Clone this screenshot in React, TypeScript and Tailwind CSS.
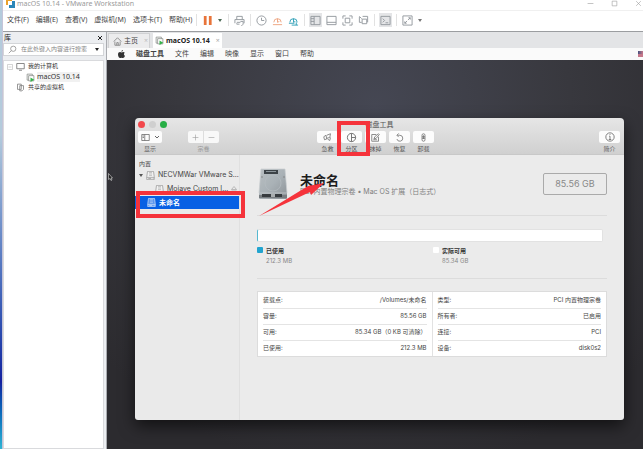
import type { ReactNode } from "react";

const stroke = { fill: "none", stroke: "currentColor", strokeWidth: 1 };

function Svg({ size = 11, className = "", children }: { size?: number; className?: string; children: ReactNode }) {
  return (
    <svg width={size} height={size} viewBox="0 0 12 12" className={`shrink-0 ${className}`} aria-hidden="true" {...stroke}>
      {children}
    </svg>
  );
}

function Separator() {
  return <span className="h-3 w-px shrink-0 bg-[#e2e2e2]" />;
}

function ToolButton({ label, pressed = false, className = "text-[#92979c]", children }: { label: string; pressed?: boolean; className?: string; children: ReactNode }) {
  return (
    <button
      type="button"
      aria-label={label}
      className={`flex h-[14px] w-[13px] shrink-0 items-center justify-center ${pressed ? "bg-[#e4e5e7]" : ""} ${className}`}
    >
      {children}
    </button>
  );
}

function Caret({ className = "" }: { className?: string }) {
  return (
    <svg width="4" height="3" viewBox="0 0 4 3" className={`shrink-0 ${className}`} aria-hidden="true">
      <path d="M0 0h4L2 3z" fill="currentColor" />
    </svg>
  );
}

function VmIcon() {
  return (
    <Svg size={9} className="text-[#858a85]">
      <path d="M3.500 9.500H1.500V1.500h7v2M3.500 3.500h7v7h-7z" />
      <path d="M6 6l5 3-5 3z" fill="#35b34a" stroke="none" />
    </Svg>
  );
}

function DriveIcon({ className = "text-[#9a9a9a]" }: { className?: string }) {
  return (
    <Svg size={9} className={className}>
      <path d="M2 .500h8l1 7v4H1v-4z" fill="#ffffff55" />
      <path d="M1 8.500h10M4 2.500h4M4 5.500h4M3 10h4M9 10h1" />
    </Svg>
  );
}

function TitleBar() {
  return (
    <header className="flex h-[11px] items-start justify-between border-b border-[#f0f0f0] bg-white pl-[3px]">
      <div className="flex h-[7px] items-center gap-[2px]">
        <svg width="9" height="9" viewBox="0 0 9 9" aria-hidden="true">
          <path d="M0 0h6v6H0z" fill="#e9a12c" />
          <path d="M3 2h6v7H3z" fill="#2c87b8" />
          <path d="M2 2h4v4H2z" fill="#fff" />
        </svg>
        <h1 className="text-[7px] leading-[8px] text-[#9a9a9a]">macOS 10.14 - VMware Workstation</h1>
      </div>
      <div className="flex h-[6px] items-center gap-[17px] pr-px text-[#9a9a9a]">
        <button type="button" aria-label="最小化"><Svg size={7}><path d="M1 6h10" /></Svg></button>
        <button type="button" aria-label="最大化"><Svg size={7}><path d="M2 2h8v8H2z" /></Svg></button>
        <button type="button" aria-label="关闭"><Svg size={7}><path d="M2 2l8 8M10 2l-8 8" /></Svg></button>
      </div>
    </header>
  );
}

const hostMenus = ["文件(F)", "编辑(E)", "查看(V)", "虚拟机(M)", "选项卡(T)", "帮助(H)"];

function Toolbar() {
  return (
    <div className="flex h-[21px] items-center border-b border-[#9b9da0] bg-white pb-[2px]">
      <nav className="flex shrink-0 gap-[7px] pr-1 pl-1 text-[7px] leading-[10px] text-[#444]">
        {hostMenus.map((m) => (
          <button key={m} type="button">{m}</button>
        ))}
      </nav>
      <div className="flex items-center gap-1">
        <Separator />
        <ToolButton label="暂停" className="text-[#e8743a]">
          <Svg><path d="M2 1h3v10H2zM7.500 1h3v10h-3z" fill="currentColor" stroke="none" /></Svg>
        </ToolButton>
        <Caret className="mr-[2px] text-[#4c6a55]" />
        <Separator />
        <ToolButton label="发送 Ctrl+Alt+Del">
          <Svg><path d="M3 5V1.500h6V5M1 9V5h10v4M3 8h4M7 7h3v3L8 12M3 9v1h3" /></Svg>
        </ToolButton>
        <Separator />
        <div className="flex gap-[3px]">
          <ToolButton label="拍摄快照"><Svg><circle cx="6" cy="6" r="5" /><path d="M6 3v3h3" /></Svg></ToolButton>
          <ToolButton label="恢复快照" className="text-[#eda27d]"><Svg><path d="M2 8a4 4 0 1 1 8 0M6 4v4l2-1M1 10.500h10" /></Svg></ToolButton>
          <ToolButton label="管理快照" className="text-[#299cb5]"><Svg><path d="M2 8a4 4 0 1 1 8 0M6 4v4l2-1M1 9h6M4 11h7M9 8v3" /></Svg></ToolButton>
        </div>
        <Separator />
        <div className="flex gap-[3px]">
          <ToolButton label="显示库" pressed><Svg><path d="M1 1.500h10v9H1zM4.500 1.500v9M1 4h3.500M1 7h3.500" /></Svg></ToolButton>
          <ToolButton label="缩略图栏"><Svg><path d="M1 1.500h10v9H1zM1 8h10" /></Svg></ToolButton>
          <ToolButton label="全屏"><Svg><path d="M1 4V1h3M8 1h3v3M11 8v3H8M4 11H1V8M3.500 3.500h5v5h-5z" /></Svg></ToolButton>
          <ToolButton label="Unity"><Svg><path d="M1.500 2v6H4M1.500 1.500L4 4M4.500 4.500h5v5h-5zM5 1.500h5.500V8" /></Svg></ToolButton>
        </div>
        <Separator />
        <ToolButton label="控制台" pressed><Svg><path d="M1 1.500h10v9H1zM3 4l2 2-2 2M6 8.500h3" /></Svg></ToolButton>
        <Separator />
        <ToolButton label="拉伸"><Svg><path d="M1 1h10v10H1zM7 3h2v2M9 3L6.500 5.500M3 7v2h2M3 9l2.500-2.500" /></Svg></ToolButton>
        <Caret className="text-[#777]" />
      </div>
    </div>
  );
}

function Library() {
  return (
    <aside className="flex w-[104px] shrink-0 flex-col border-r border-[#a9abb0] bg-[#eceef1]">
      <div className="flex h-[11px] items-center justify-between px-px text-[7px] leading-[10px] text-[#222]">
        <h2>库</h2>
        <button type="button" aria-label="关闭库" className="mr-[2px]">
          <Svg size={6}><path d="M2 2l8 8M10 2l-8 8" strokeWidth="2" /></Svg>
        </button>
      </div>
      <div className="mr-[2px] flex h-[13px] items-center gap-1 border border-[#d3d5d8] bg-white px-1 text-[#888]">
        <Svg size={9}><circle cx="7" cy="5" r="3.500" /><path d="M4.500 7.500L1 11" /></Svg>
        <input
          type="text"
          aria-label="搜索"
          placeholder="在此处键入内容进行搜索"
          className="min-w-0 flex-1 text-[6px] leading-[9px] outline-none placeholder:text-[#858585]"
        />
        <Caret className="text-[#222]" />
      </div>
      <ul className="mt-1 mr-[2px] flex-1 border border-[#d9dadd] bg-white text-[6px] leading-[11px] text-[#333]">
        <li className="flex h-[11px] items-center gap-[3px] pl-[3px]">
          <Svg size={6} className="text-[#aaa]"><path d="M1 1h10v10H1zM3 6h6" /></Svg>
          <Svg size={9} className="text-[#666]"><path d="M1 2h10v7H1zM4 11h4" /></Svg>
          <span>我的计算机</span>
        </li>
        <li className="flex h-[10px] items-center gap-[2px] pl-[22px] text-[7px] leading-[10px]">
          <VmIcon />
          <span className="bg-[#f1f1f1]">macOS 10.14</span>
        </li>
        <li className="flex h-[11px] items-center gap-[3px] pl-3">
          <Svg size={9} className="text-[#777]"><path d="M2 1.500h5v7H2zM5 3.500h5v5l-2 2H5z" /></Svg>
          <span>共享的虚拟机</span>
        </li>
      </ul>
    </aside>
  );
}

function Tabs() {
  return (
    <div role="tablist" className="flex h-4 items-end gap-[3px] bg-[#e3e4e6] pl-px text-[7px] leading-[10px]">
      <button type="button" role="tab" aria-selected="false" className="flex h-[15px] w-[42px] items-center gap-[2px] border border-b-0 border-[#d0d1d3] bg-[#ececed] pl-1 text-[#444]">
        <Svg size={9} className="text-[#777]"><path d="M1 6l5-5 5 5M2.500 6v5h7V6M5 11V7.500h2V11" /></Svg>
        <span>主页</span>
        <span className="ml-1 text-[#bbb]">×</span>
      </button>
      <button type="button" role="tab" aria-selected="true" className="flex h-[15px] items-center gap-[2px] bg-white px-[2px] font-bold text-[#222]">
        <VmIcon />
        <span>macOS 10.14</span>
        <span className="ml-1 font-normal text-[#aaa]">×</span>
      </button>
    </div>
  );
}

const guestMenus = ["文件", "编辑", "映像", "显示", "窗口", "帮助"];

function GuestMenuBar() {
  return (
    <nav className="flex h-3 items-center justify-between bg-[#fafafa] text-[7px] leading-[10px] text-[#444]">
      <div className="flex items-center gap-[11px] pl-[11px]">
        <svg width="7" height="8" viewBox="0 0 14 16" fill="#333" aria-hidden="true">
          <path d="M10 0c0 2-1.500 3.500-3.200 3.500C6.700 1.700 8.200.2 10 0zM13.500 5.500c-2.400 1.500-2 5 .5 6-1 2.700-2.600 4.500-4 4.500-1.200 0-1.600-.7-2.900-.7s-1.800.7-2.900.7C2 16 0 12 0 8.800 0 5.600 2 4 4 4c1.300 0 2.200.8 3.200.8S9.300 4 10.600 4c1.200 0 2.200.6 2.900 1.500z" />
        </svg>
        <button type="button" className="text-[7px] font-bold">磁盘工具</button>
        {guestMenus.map((m) => (
          <button key={m} type="button">{m}</button>
        ))}
      </div>
      <span className="flex h-[6px] w-[5px] flex-col">
        <span className="h-1/2 bg-linear-to-r from-[#44507e] to-[#c6788a]" />
        <span className="h-1/2 bg-[#c6788a]" />
      </span>
    </nav>
  );
}

function MacButton({ label, children }: { label: string; children: ReactNode }) {
  return (
    <button type="button" className="flex flex-col items-center gap-px text-[6px] leading-[9px] text-[#555]">
      <span className="flex h-3 w-[21px] items-center justify-center rounded-[2px] bg-[#fcfcfc] text-[#6a6a6a]">{children}</span>
      {label}
    </button>
  );
}

function WindowToolbar() {
  return (
    <div className="flex h-[37px] flex-col rounded-t-[4px] border-b border-[#c8c8c8] bg-linear-to-b from-[#e6e6e6] to-[#d0d0d0]">
      <div className="grid h-[13px] grid-cols-3 items-center px-[3px]">
        <div className="flex gap-1">
          <button type="button" aria-label="关闭" className="size-[7px] rounded-full bg-[#f2484c]" />
          <button type="button" aria-label="最小化" className="size-[7px] rounded-full bg-[#cfcfcf]" />
          <button type="button" aria-label="缩放" className="size-[7px] rounded-full bg-[#27ae45]" />
        </div>
        <h2 className="text-center text-[7px] leading-[10px] text-[#555]">磁盘工具</h2>
      </div>
      <div className="flex items-start pr-1 pl-[3px]">
        <button type="button" className="flex flex-col items-center gap-px text-[6px] leading-[9px] text-[#666]">
          <span className="flex h-3 w-6 items-center justify-center gap-1 rounded-[2px] bg-[#fcfcfc] text-[#666]">
            <Svg size={9}><path d="M1 2h10v8H1zM5 2v8M2 4h2M2 6h2" /></Svg>
            <Svg size={6}><path d="M2 4l4 4 4-4" strokeWidth="2" /></Svg>
          </span>
          显示
        </button>
        <div className="ml-[26px] flex flex-col items-center gap-px text-[6px] leading-[9px] text-[#999]">
          <div className="flex h-3 divide-x divide-[#ddd] rounded-[2px] bg-[#f8f8f8]">
            <button type="button" aria-label="添加宗卷" className="flex w-4 items-center justify-center"><Svg size={7}><path d="M6 1v10M1 6h10" /></Svg></button>
            <button type="button" aria-label="移除宗卷" className="flex w-[15px] items-center justify-center"><Svg size={7}><path d="M1 6h10" /></Svg></button>
          </div>
          宗卷
        </div>
        <div className="ml-[98px] flex gap-[3px]">
          <MacButton label="急救"><Svg size={9}><path d="M1 5l3-2 1 5-3 1zM5 3l5-2-1 5-4 1M6 8l3 2 1-4" /></Svg></MacButton>
          <MacButton label="分区"><Svg><circle cx="6" cy="6" r="4.500" /><path d="M6 1.500v9M6 6h4.500" /></Svg></MacButton>
          <MacButton label="抹掉"><Svg size={9}><path d="M10 5v6H1V2h6M4 8l1-3 5-4 1 1-4 5zM3 9h5" /></Svg></MacButton>
          <MacButton label="恢复"><Svg size={9}><path d="M3 3h3.500a4 4 0 1 1-4 5M5 .500L2.500 3 5 5.500" /></Svg></MacButton>
          <MacButton label="卸载"><Svg size={9}><path d="M4 3a2 2 0 0 1 4 0v6a2 2 0 0 1-4 0zM6 3v5M4 5h4M4 7h4" /></Svg></MacButton>
        </div>
        <div className="ml-auto">
          <MacButton label="简介"><Svg size={10}><circle cx="6" cy="6" r="5" /><path d="M5 5h1v4M4.500 9h3M6 2.500v1" /></Svg></MacButton>
        </div>
      </div>
    </div>
  );
}

function Sidebar() {
  return (
    <aside className="w-[105px] shrink-0 border-r border-[#e0e0e0] bg-[#eaeaea] pt-1 text-[7px] leading-[14px] text-[#444]">
      <h3 className="pl-1 text-[6px] leading-[9px]">内置</h3>
      <ul>
        <li className="flex h-[14px] items-center gap-[3px] pl-1">
          <Caret className="text-[#555]" />
          <DriveIcon />
          <span className="whitespace-nowrap">NECVMWar VMware S...</span>
        </li>
        <li className="flex h-[14px] items-center gap-[3px] pl-5">
          <DriveIcon />
          <span className="whitespace-nowrap">Mojave Custom I...</span>
          <button type="button" aria-label="推出" className="mr-[3px] ml-auto">
            <Svg size={6} className="text-[#888]"><path d="M6 1l5 6H1zM1 10h10" /></Svg>
          </button>
        </li>
        <li className="flex h-[13px] items-center gap-[3px] bg-[#0860e4] pl-3 font-bold text-white">
          <DriveIcon className="text-[#c8dcf8]" />
          未命名
        </li>
      </ul>
    </aside>
  );
}

function DiskPicture() {
  return (
    <svg width="30" height="32" viewBox="0 0 30 32" className="shrink-0" aria-hidden="true">
      <defs>
        <linearGradient id="disk" x1="0" y1="0" x2="1" y2="1">
          <stop offset="0" stopColor="#b9bfc2" />
          <stop offset="0.500" stopColor="#a9b1b6" />
          <stop offset="1" stopColor="#8b9196" />
        </linearGradient>
      </defs>
      <path d="M3 1h24l2 24v5a1 1 0 0 1-1 1H2a1 1 0 0 1-1-1v-5z" fill="url(#disk)" />
      <path d="M3 1h24l2 24H1z" fill="none" stroke="#c9cdd0" strokeWidth="0.700" />
      <path d="M6 2h14v4H6z" fill="#3d4347" />
      <path d="M8 3h10v1H8z" fill="#8b9499" />
      <circle cx="15" cy="15" r="8" fill="none" stroke="#b4bcc0" strokeWidth="0.700" />
      <circle cx="4" cy="9" r="0.700" fill="#777" />
      <circle cx="26" cy="9" r="0.700" fill="#777" />
      <path d="M1 27h28v3H1z" fill="#777c80" />
      <path d="M4 26h9v3H4zM17 26h7v3h-7z" fill="#373b3f" />
      <path d="M13 26h4v3h-4z" fill="#a9adaf" />
    </svg>
  );
}

const details = [
  [["装载点:", "/Volumes/未命名"], ["容量:", "85.56 GB"], ["可用:", "85.34 GB（0 KB 可清除）"], ["已使用:", "212.3 MB"]],
  [["类型:", "PCI 内置物理宗卷"], ["所有者:", "已启用"], ["连接:", "PCI"], ["设备:", "disk0s2"]],
];

function Details() {
  return (
    <div className="mt-3 flex border border-[#dcdcdc] bg-white text-[6px] leading-[10px] text-[#444]">
      {details.map((rows, i) => (
        <div key={i} className={`flex-1 px-[5px] ${i ? "border-l border-[#e2e2e2]" : ""}`}>
          <table className="w-full">
            <tbody className="divide-y divide-[#e4e4e4]">
              {rows.map(([k, v]) => (
                <tr key={k} className="h-4">
                  <th scope="row" className="text-left font-normal">{k}</th>
                  <td className="text-right">{v}</td>
                </tr>
              ))}
            </tbody>
          </table>
        </div>
      ))}
    </div>
  );
}

function VolumeInfo() {
  return (
    <section className="min-w-0 flex-1 bg-[#ebebeb] px-[17px]">
      <div className="flex h-[61px] items-center border-b border-[#dcdcdc] pb-[2px]">
        <div className="flex flex-1 items-center gap-3 pl-px">
          <DiskPicture />
          <div>
            <h3 className="text-[13px] leading-[14px] font-bold text-[#1c1c1c]">未命名</h3>
            <p className="text-[7px] leading-[9px] text-[#808080]">PCI 内置物理宗卷 • Mac OS 扩展（日志式）</p>
          </div>
        </div>
        <span className="flex h-[22px] w-16 items-center justify-center rounded-[2px] border border-[#aaa] text-[9px] leading-3 text-[#888]">85.56 GB</span>
      </div>
      <div className="mt-[13px] mr-1 h-[13px] rounded-[2px] border border-l-[#55b8d0] border-[#e2e2e2] bg-white" />
      <div className="grid h-[37px] grid-cols-2 border-b border-[#dcdcdc] pt-[3px] text-[6px]">
        <div className="flex gap-[3px]">
          <span className="mt-[2px] size-[6px] rounded-[1px] bg-[#22a4cf]" />
          <div>
            <p className="leading-[11px] font-bold text-[#333]">已使用</p>
            <p className="leading-[10px] text-[#888]">212.3 MB</p>
          </div>
        </div>
        <div className="flex gap-[3px] pl-px">
          <span className="mt-[2px] size-[6px] rounded-[1px] bg-white" />
          <div>
            <p className="leading-[11px] font-bold text-[#333]">实际可用</p>
            <p className="leading-[10px] text-[#888]">85.34 GB</p>
          </div>
        </div>
      </div>
      <Details />
    </section>
  );
}

function Annotations() {
  return (
    <div className="pointer-events-none absolute inset-0">
      <div className="absolute top-[3px] left-[202px] h-[35px] w-[33px] border-4 border-[#f5333b]" />
      <div className="absolute top-[73px] left-px h-[27px] w-[109px] border-4 border-[#f5333b]" />
      <svg width="70" height="36" viewBox="0 0 70 36" className="absolute top-[63px] left-[123px]" aria-hidden="true">
        <path d="M1 35L50 5l16-3-13 12-1-3z" fill="#f5333b" />
      </svg>
    </div>
  );
}

function DiskUtility() {
  return (
    <div className="relative flex w-full flex-col rounded-[4px] font-[Inter,'Noto_Sans_CJK_SC',sans-serif] shadow-[0_6px_16px_#0009]">
      <WindowToolbar />
      <div className="flex flex-1 overflow-hidden rounded-b-[3px]">
        <Sidebar />
        <VolumeInfo />
      </div>
      <Annotations />
    </div>
  );
}

export default function App() {
  return (
    <div className="flex h-screen w-full overflow-hidden bg-white font-['Noto_Sans','Noto_Sans_CJK_SC',sans-serif]">
      <div className="w-[3px] shrink-0 border-r border-[#c5c4d8] bg-linear-to-b from-[#b4cbdc] from-30% via-[#1520a0] via-85% to-[#2fb4d4]" />
      <div className="flex min-w-0 flex-1 flex-col">
        <TitleBar />
        <Toolbar />
        <div className="flex min-h-0 flex-1">
          <Library />
          <main className="flex min-w-0 flex-1 flex-col">
            <Tabs />
            <GuestMenuBar />
            <div className="relative flex flex-1 bg-[radial-gradient(circle_at_50%_12%,#454753,#38383e_45%,#2c2b2f_85%)] pt-[58px] pr-[19px] pb-[29px] pl-7">
              <svg width="5" height="8" viewBox="0 0 5 8" className="absolute top-[113px] left-px" aria-hidden="true">
                <path d="M.5.500v6l1.500-1 1 2 1-.500-1-2h1.500z" fill="#222" stroke="#ddd" strokeWidth="0.600" />
              </svg>
              <DiskUtility />
            </div>
          </main>
        </div>
      </div>
    </div>
  );
}
